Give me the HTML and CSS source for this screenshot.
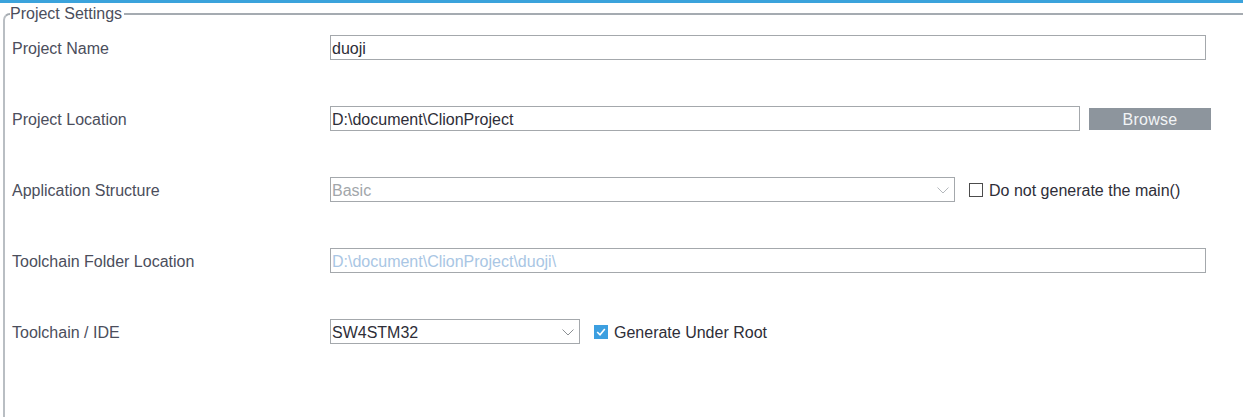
FILE: index.html
```html
<!DOCTYPE html>
<html>
<head>
<meta charset="utf-8">
<link rel="stylesheet" href="styles.css">
</head>
<body>
<div class="topbar"></div>
<fieldset class="settings">
  <legend>Project Settings</legend>
  <div class="row">
    <div class="label">Project Name</div>
    <div class="input w-full">duoji</div>
  </div>
  <div class="row">
    <div class="label">Project Location</div>
    <div class="input w-loc">D:\document\ClionProject</div>
    <div class="btn">Browse</div>
  </div>
  <div class="row">
    <div class="label">Application Structure</div>
    <div class="input select disabled w-struct">Basic
      <svg class="chev" width="12" height="7" viewBox="0 0 12 7"><path d="M0.5 0.5 L6 6 L11.5 0.5" fill="none" stroke="#b4b8bc" stroke-width="1"/></svg>
    </div>
    <div class="check">
      <span class="box"></span>
      <span class="check-label">Do not generate the main()</span>
    </div>
  </div>
  <div class="row">
    <div class="label">Toolchain Folder Location</div>
    <div class="input w-full faded">D:\document\ClionProject\duoji\</div>
  </div>
  <div class="row">
    <div class="label">Toolchain / IDE</div>
    <div class="input select w-ide">SW4STM32
      <svg class="chev" width="12" height="7" viewBox="0 0 12 7"><path d="M0.5 0.5 L6 6 L11.5 0.5" fill="none" stroke="#8c9094" stroke-width="1"/></svg>
    </div>
    <div class="check">
      <span class="box checked"><svg width="14" height="14" viewBox="0 0 14 14"><path d="M3.2 7 L6 9.8 L10.8 4" fill="none" stroke="#fff" stroke-width="1.6"/></svg></span>
      <span class="check-label">Generate Under Root</span>
    </div>
  </div>
</fieldset>
</body>
</html>
```

FILE: styles.css
```css
html, body {
  margin: 0;
  padding: 0;
  background: #ffffff;
  width: 1243px;
  height: 417px;
  overflow: hidden;
  font-family: "Liberation Sans", Arial, sans-serif;
  font-size: 16px;
}

.topbar {
  height: 3px;
  background: #3ba3dc;
}

.settings {
  margin: 2px 0 0 3px;
  padding: 0 0 0 7px;
  border: none;
  border-top: 2px solid #a5abb1;
  border-left: 2px solid #b9bec3;
  border-top-left-radius: 7px;
  height: 420px;
  box-sizing: border-box;
  min-width: 0;
}

.settings legend {
  padding: 0 2px 0 0;
  margin-left: -2px;
  color: #4b4e5c;
  font-size: 16px;
  line-height: 18px;
}

.row {
  display: flex;
  align-items: center;
  height: 25px;
  margin-top: 46px;
}

.row:first-of-type {
  margin-top: 12px;
}

.label {
  width: 318px;
  flex: none;
  color: #4b4e5c;
  padding-top: 2px;
}

.input {
  box-sizing: border-box;
  height: 25px;
  border: 1px solid #a4a8ac;
  background: #fff;
  color: #2e2e38;
  padding: 1px 1px 0;
  line-height: 23px;
  position: relative;
  flex: none;
  white-space: nowrap;
}

.w-full { width: 876px; }
.w-loc { width: 750px; }
.w-struct { width: 625px; }
.w-ide { width: 250px; }

.disabled { color: #a2a6aa; }
.faded { color: #a9c6e4; }

.chev {
  position: absolute;
  right: 5px;
  top: 9px;
}

.btn {
  margin-left: 9px;
  width: 122px;
  height: 22px;
  background: #8d959d;
  color: #f2f4f6;
  text-align: center;
  line-height: 23px;
  font-size: 16px;
  letter-spacing: 0.3px;
}

.check {
  display: flex;
  align-items: center;
  margin-left: 14px;
}

.box {
  box-sizing: border-box;
  width: 14px;
  height: 14px;
  border: 1px solid #4c4c4c;
  background: #fff;
  display: block;
}

.box.checked {
  border: none;
  background: #3c9fe0;
}

.box svg { display: block; width: 14px; height: 14px; }

.check-label {
  margin-left: 6px;
  color: #2e2e38;
  padding-top: 2px;
}
```
